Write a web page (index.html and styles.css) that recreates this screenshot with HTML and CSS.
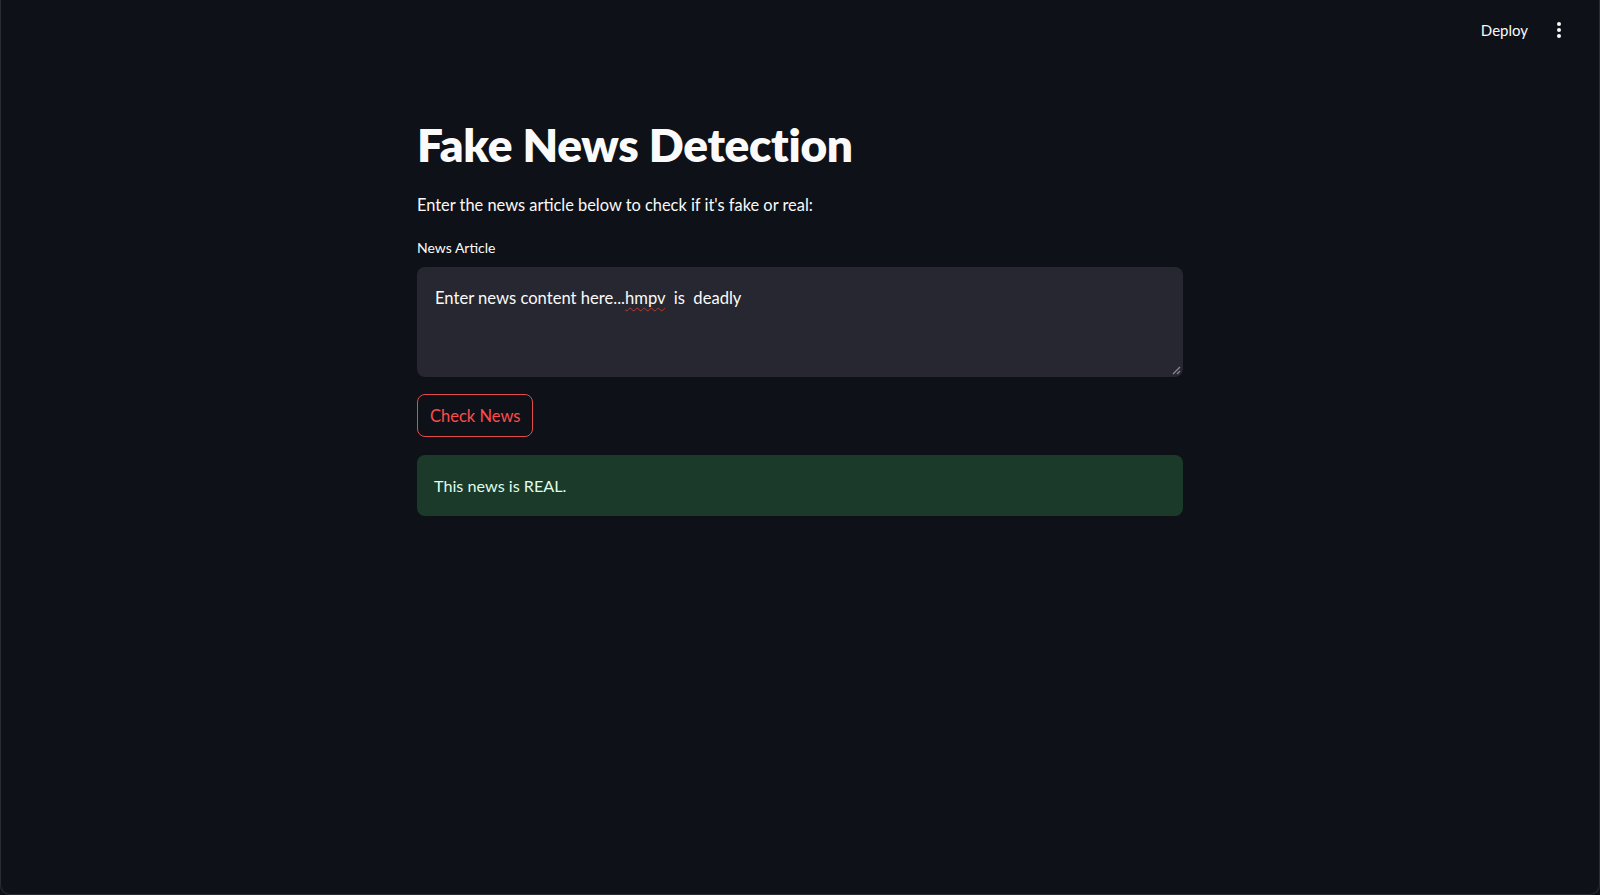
FILE: index.html
```html
<!DOCTYPE html>
<html lang="en">
<head>
<meta charset="utf-8">
<title>Fake News Detection</title>
<link rel="stylesheet" href="styles.css">
</head>
<body>
<div class="app">
  <header class="topbar">
    <span class="deploy">Deploy</span>
    <span class="menu" aria-label="menu">
      <svg width="6" height="18" viewBox="0 0 6 18"><circle cx="3" cy="3" r="2" fill="#fafafa"/><circle cx="3" cy="9" r="2" fill="#fafafa"/><circle cx="3" cy="15" r="2" fill="#fafafa"/></svg>
    </span>
  </header>
  <main class="block">
    <h1 class="title">Fake News Detection</h1>
    <p class="intro">Enter the news article below to check if it's fake or real:</p>
    <label class="label">News Article</label>
    <div class="textarea">
      <span class="value">Enter news content here...<span class="typo">hmpv</span>&nbsp; is&nbsp; deadly</span>
      <svg class="grip" width="9" height="9" viewBox="0 0 9 9"><path d="M8 1 L1 8 M8 5 L5 8" stroke="#8a8b94" stroke-width="1.2" fill="none"/></svg>
    </div>
    <button class="btn">Check News</button>
    <div class="alert">This news is REAL.</div>
  </main>
</div>
</body>
</html>
```
FILE: styles.css
```css
html, body {
  margin: 0;
  padding: 0;
  background: #0e1117;
}
body {
  font-family: "Lato", "Noto Sans", sans-serif;
  color: #fafafa;
}
.app {
  height: 895px;
  box-sizing: border-box;
  border: 1px solid #2a2c33;
  border-top: none;
  border-radius: 0 0 10px 10px;
  overflow: hidden;
}
.topbar {
  height: 60px;
  display: flex;
  align-items: center;
  justify-content: flex-end;
  padding-right: 37px;
  gap: 28px;
}
.deploy {
  font-size: 15px;
  color: #fafafa;
}
.menu {
  display: flex;
  align-items: center;
}
.block {
  width: 766px;
  margin: 0 auto;
  padding-top: 55px;
  display: flex;
  flex-direction: column;
  align-items: flex-start;
}
.title {
  margin: 0;
  font-size: 46px;
  font-weight: 800;
  line-height: 60px;
  letter-spacing: -0.3px;
}
.intro {
  margin: 17px 0 0;
  font-size: 16.4px;
  line-height: 26px;
}
.label {
  margin-top: 20px;
  font-size: 14px;
  line-height: 20px;
}
.textarea {
  margin-top: 9px;
  width: 766px;
  height: 110px;
  box-sizing: border-box;
  background: #262730;
  border-radius: 8px;
  padding: 19px 18px;
  position: relative;
  font-size: 16.6px;
  line-height: 24px;
}
.typo {
  text-decoration: underline wavy #c0392b;
  text-decoration-thickness: 1px;
  text-underline-offset: 3px;
}
.grip {
  position: absolute;
  right: 2px;
  bottom: 2px;
}
.btn {
  margin-top: 17px;
  height: 43px;
  padding: 0 12px;
  background: #0e1117;
  border: 1px solid #e34b4b;
  border-radius: 8px;
  color: #ff4b4b;
  font-family: inherit;
  font-size: 16.5px;
}
.alert {
  margin-top: 18px;
  width: 766px;
  height: 61px;
  box-sizing: border-box;
  background: #1b3a2a;
  border-radius: 8px;
  padding: 0 17px;
  display: flex;
  align-items: center;
  font-size: 16.2px;
  color: #dffde9;
}
```
